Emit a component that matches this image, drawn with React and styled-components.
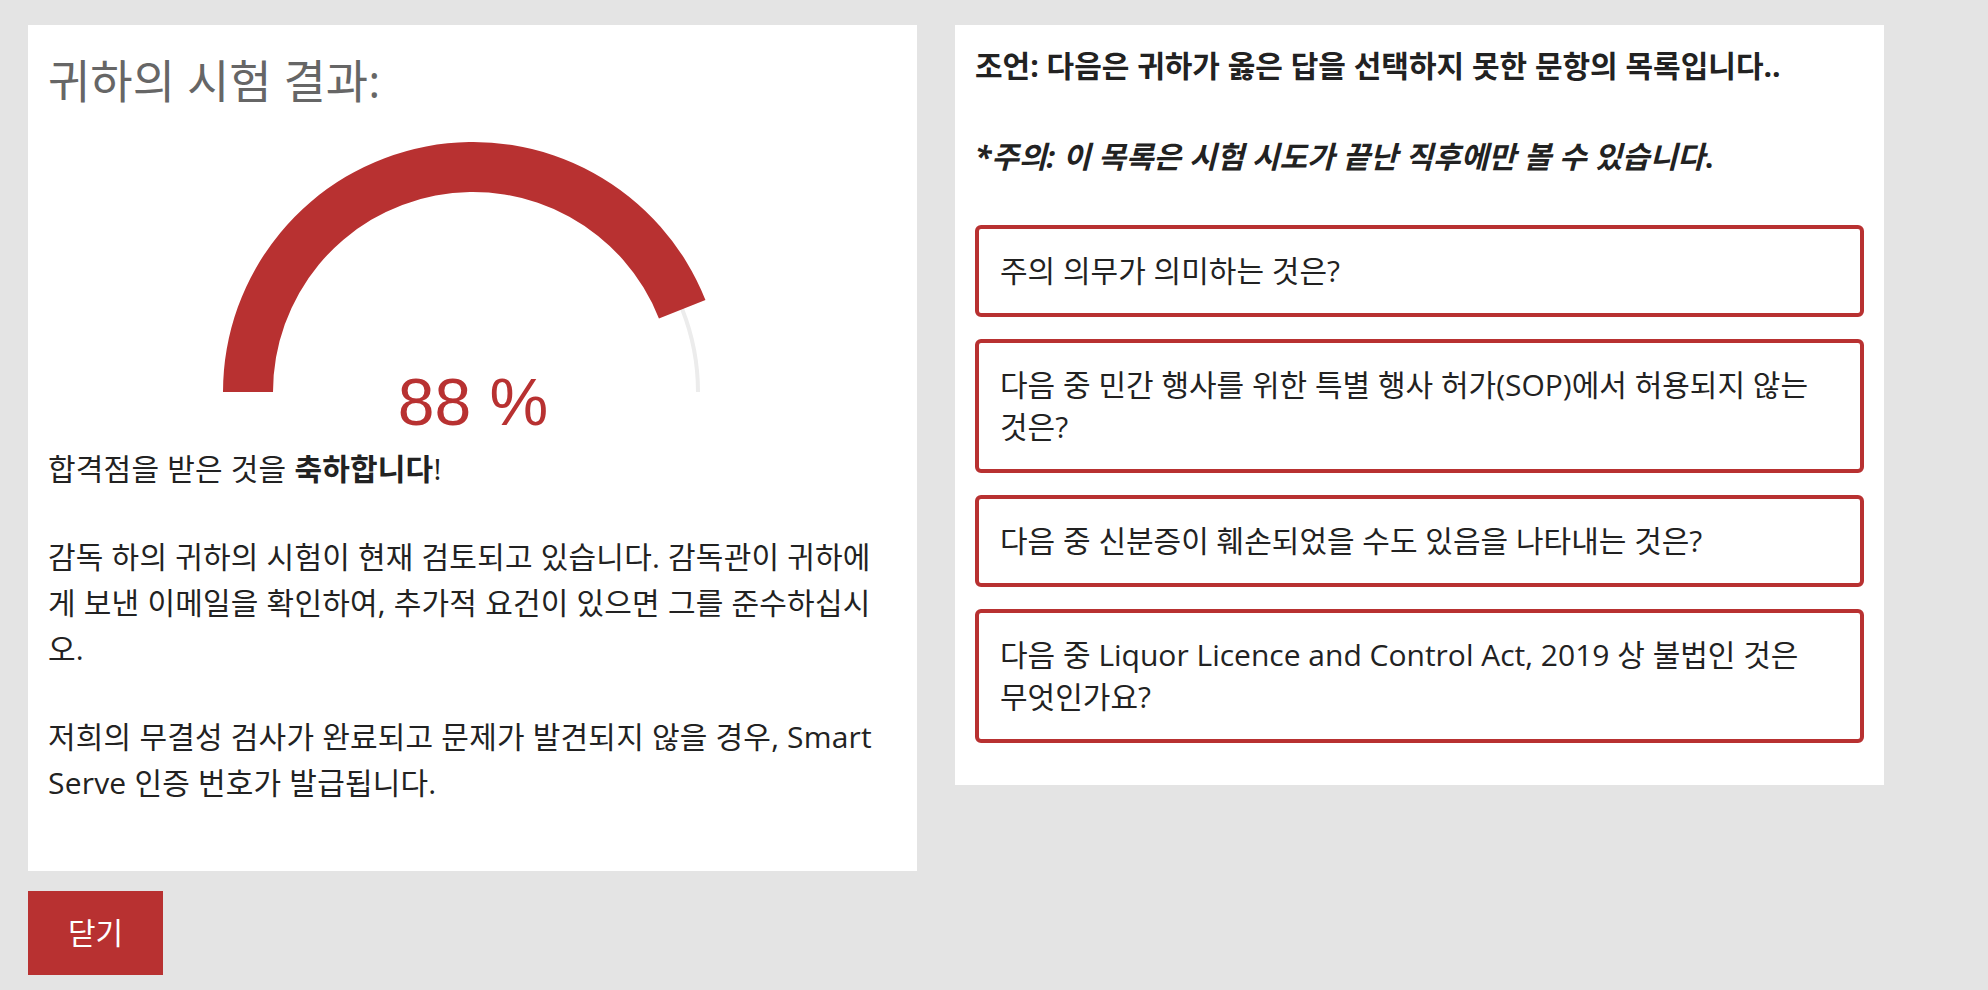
import React from 'react';
import styled, {createGlobalStyle} from 'styled-components';

const RED = '#b83131';
const FONT = "'Open Sans', 'Noto Sans CJK KR', sans-serif";

const GlobalStyle = createGlobalStyle`
  html, body {
    margin: 0;
    padding: 0;
    background: #e4e4e4;
  }
  body {
    font-family: ${FONT};
    color: #222;
  }
`;

// 페이지 전체
const Page = styled.div`
  display: flex;
  align-items: flex-start;
  gap: 38px;
  padding: 25px 28px;
  min-height: 100vh;
  box-sizing: border-box;
`;

const LeftCol = styled.div`
  display: flex;
  flex-direction: column;
  align-items: flex-start;
  gap: 20px;
  width: 889px;
`;

const Card = styled.div`
  background: #fff;
  box-sizing: border-box;
  width: ${p => p.$width}px;
  padding: ${p => p.$pad};
`;

const Title = styled.h2`
  margin: 0 0 27px;
  font-size: 46px;
  line-height: 70px;
  font-weight: 400;
  color: #666;
`;

const GaugeBox = styled.div`
  display: flex;
  justify-content: center;
  svg {
    display: block;
  }
`;

const Text = styled.p`
  margin: 0 0 42px;
  font-size: 30px;
  line-height: 46px;
  letter-spacing: 0.2px;
  &:last-child {
    margin-bottom: 0;
  }
`;

const Notice = styled.p`
  margin: 0 0 ${p => p.$gap}px;
  font-size: 30px;
  line-height: 42px;
  font-weight: 700;
  em {
    font-style: italic;
  }
`;

const QuestionList = styled.div`
  display: flex;
  flex-direction: column;
  gap: 22px;
`;

const Question = styled.div`
  border: 4px solid ${RED};
  border-radius: 6px;
  padding: 21px 21px;
  font-size: 30px;
  line-height: 42px;
  word-break: keep-all;
`;

const CloseButton = styled.button`
  border: 0;
  border-radius: 0;
  background: ${RED};
  color: #fff;
  font-family: ${FONT};
  font-size: 30px;
  line-height: 42px;
  padding: 21px 40px;
  cursor: pointer;
`;

/* 반원 게이지 */
const Gauge = ({value}) => {
  const cx = 250;
  const cy = 250;
  const R = 250;
  const r = 200;
  const a = Math.PI * (1 - value / 100);
  const ox = cx + R * Math.cos(a);
  const oy = cy - R * Math.sin(a);
  const ix = cx + r * Math.cos(a);
  const iy = cy - r * Math.sin(a);
  const d = `M${cx - R} ${cy} A${R} ${R} 0 0 1 ${ox} ${oy} L${ix} ${iy} A${r} ${r} 0 0 0 ${cx - r} ${cy} Z`;
  return (
    <svg width="500" height="304" viewBox="0 0 500 304">
      <path d={`M${cx - 225} ${cy} A225 225 0 0 1 ${cx + 225} ${cy}`} fill="none" stroke="#ececec" strokeWidth="4" />
      <path d={d} fill={RED} />
      <text
        x={cx}
        y="283"
        textAnchor="middle"
        fill={RED}
        fontFamily="'Liberation Sans', Arial, sans-serif"
        fontSize="66"
      >
        {value} %
      </text>
    </svg>
  );
};

const questions = [
  '주의 의무가 의미하는 것은?',
  '다음 중 민간 행사를 위한 특별 행사 허가(SOP)에서 허용되지 않는 것은?',
  '다음 중 신분증이 훼손되었을 수도 있음을 나타내는 것은?',
  '다음 중 Liquor Licence and Control Act, 2019 상 불법인 것은 무엇인가요?'
];

const App = () => {
  return (
    <>
      <GlobalStyle />
      <Page>
        <LeftCol>
          <Card $width={889} $pad="20px 20px 65px">
            <Title>귀하의 시험 결과:</Title>
            <GaugeBox>
              <Gauge value={88} />
            </GaugeBox>
            <Text>
              합격점을 받은 것을 <b>축하합니다</b>!
            </Text>
            <Text>
              감독 하의 귀하의 시험이 현재 검토되고 있습니다. 감독관이 귀하에게 보낸 이메일을 확인하여, 추가적 요건이 있으면 그를 준수하십시오.
            </Text>
            <Text>
              저희의 무결성 검사가 완료되고 문제가 발견되지 않을 경우, Smart Serve 인증 번호가 발급됩니다.
            </Text>
          </Card>
          <CloseButton>닫기</CloseButton>
        </LeftCol>
        <Card $width={929} $pad="20px 20px 42px">
          <Notice $gap={49}>조언: 다음은 귀하가 옳은 답을 선택하지 못한 문항의 목록입니다..</Notice>
          <Notice $gap={47}>
            <em>*주의: 이 목록은 시험 시도가 끝난 직후에만 볼 수 있습니다</em>.
          </Notice>
          <QuestionList>
            {questions.map(q => (
              <Question key={q}>{q}</Question>
            ))}
          </QuestionList>
        </Card>
      </Page>
    </>
  );
};

export default App;
